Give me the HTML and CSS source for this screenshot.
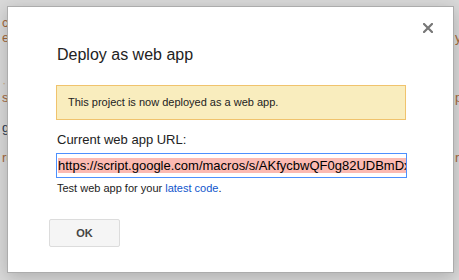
FILE: index.html
```html
<!DOCTYPE html>
<html lang="en">
<head>
  <meta charset="UTF-8" />
  <meta name="viewport" content="width=device-width, initial-scale=1.0"/>
  <title>Deploy as web app</title>
  <link rel="stylesheet" href="styles.css">
</head>
<body>
  <div class="backdrop">
    <span></span><span></span>
    <span>code</span><span></span>
    <span>edit</span><span>your</span>
    <span></span><span></span>
    <span></span><span></span>
    <span class="dot">·</span><span></span>
    <span>save</span><span>project</span>
    <span></span><span></span>
    <span class="dark">gu</span><span></span>
    <span></span><span></span>
    <span>run</span><span>run</span>
  </div>

  <div class="dialog" role="dialog">
    <button class="close" aria-label="Close">
      <svg width="10" height="10" viewBox="0 0 10 10"><path d="M1 1L9 9M9 1L1 9" stroke="#777" stroke-width="2.2" stroke-linecap="square"/></svg>
    </button>
    <h1 class="title">Deploy as web app</h1>
    <div class="notice">This project is now deployed as a web app.</div>
    <label class="label">Current web app URL:</label>
    <div class="url-field"><span class="sel">https://script.google.com/macros/s/AKfycbwQF0g82UDBmDxYqLw3cNvHk/exec</span></div>
    <p class="hint">Test web app for your <a href="#">latest code</a>.</p>
    <div class="buttons">
      <button class="btn">OK</button>
    </div>
  </div>
</body>
</html>
```

FILE: styles.css
```css
body { margin: 0; background: #d9d9d9; font-family: "Liberation Sans", Arial, sans-serif; color: #222; width: 459px; height: 280px; overflow: hidden; }
.backdrop { display: grid; grid-template-columns: 453px 1fr; grid-auto-rows: 15px; padding-left: 2px; font-size: 13px; line-height: 15px; color: #a2683c; white-space: nowrap; overflow: hidden; }
.backdrop .dark { color: #2d3a52; }
.backdrop .dot { color: #c9b08c; }

.dialog { position: absolute; left: 7px; top: 6px; width: 447px; height: 267px; box-sizing: border-box; background: #fff; border: 1px solid #acacac; box-shadow: 0 4px 16px rgba(0,0,0,.2); padding: 39px 0 0 41px; }
.close { position: absolute; top: 16px; right: 20px; border: 0; background: none; padding: 0; width: 10px; height: 10px; cursor: pointer; }
.close svg { display: block; }

.title { margin: 0 0 21px 8px; font-size: 16px; line-height: 18px; font-weight: normal; color: #222; }
.notice { margin-left: 7px; width: 350px; box-sizing: border-box; background: #f9edbe; border: 1px solid #f0c36d; padding: 10px 11px; font-size: 11px; line-height: 13px; }
.label { display: block; margin: 12px 0 6px 8px; font-size: 13px; line-height: 15px; }
.url-field { margin-left: 7px; width: 351px; height: 25px; box-sizing: border-box; border: 1px solid #4d90fe; padding: 3px 0 0 1px; font-size: 13px; line-height: 17px; white-space: nowrap; overflow: hidden; }
.sel { background: #fbbab2; color: #000; }
.hint { margin: 4px 0 0 8px; font-size: 11px; line-height: 13px; }
.hint a { color: #15c; text-decoration: none; }
.buttons { margin-top: 24px; }
.btn { width: 71px; height: 28px; border: 1px solid #dcdcdc; border-radius: 2px; background: #f5f5f5; font-family: inherit; font-size: 11px; font-weight: bold; color: #444; padding: 0; }
```
